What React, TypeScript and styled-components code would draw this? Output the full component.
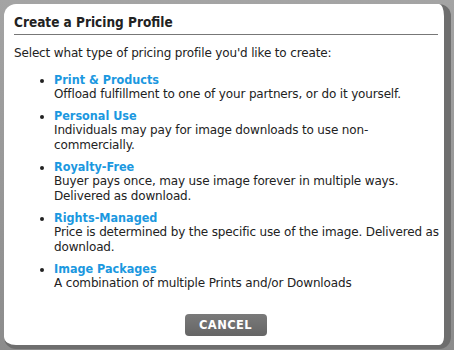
import styled, { createGlobalStyle } from 'styled-components';

const GlobalStyle = createGlobalStyle`
  html, body {
    margin: 0;
    padding: 0;
    width: 454px;
    height: 350px;
    overflow: hidden;
    background: #8c8c8c;
  }
`;

const Backdrop = styled.div`
  width: 454px;
  height: 350px;
  box-sizing: border-box;
  padding: 4px 3px 1px 4px;
  background: linear-gradient(#a4a4a4, #8c8c8c);
`;

const Dialog = styled.div`
  height: 100%;
  box-sizing: border-box;
  background: #fff;
  border-radius: 12px;
  border-right: 7px solid #6e6e6e;
  border-bottom: 4px solid #6e6e6e;
  padding: 6px 3px 0 10px;
  display: flex;
  flex-direction: column;
  font-family: 'DejaVu Sans', sans-serif;
  color: #222;
`;

const Title = styled.h1`
  margin: 0 3px 0 0;
  padding: 3px 0;
  font-family: 'DejaVu Sans Condensed', 'DejaVu Sans', sans-serif;
  font-size: 13.5px;
  line-height: 18px;
  font-weight: bold;
  border-bottom: 1px solid #777;
`;

const Intro = styled.p`
  margin: 11px 0 0;
  font-size: 12px;
  line-height: 15px;
  letter-spacing: -0.15px;
`;

const List = styled.ul`
  margin: 11px 0 0;
  padding: 0 0 0 40px;
  list-style: disc;
  font-size: 12px;
  line-height: 15px;
  letter-spacing: -0.15px;
`;

const Item = styled.li`
  margin-bottom: 6px;
`;

const Link = styled.a`
  display: block;
  color: #1b98e0;
  font-family: 'DejaVu Sans Condensed', 'DejaVu Sans', sans-serif;
  font-weight: bold;
  font-size: 12.5px;
  letter-spacing: 0;
  text-decoration: none;
`;

const Footer = styled.div`
  margin-top: auto;
  padding: 0 4px 9px 0;
  display: flex;
  justify-content: center;
`;

const Button = styled.button`
  width: 82px;
  height: 22px;
  border: none;
  border-radius: 4px;
  background: linear-gradient(#7a7a7a, #656565);
  color: #fff;
  font-family: 'DejaVu Sans', sans-serif;
  font-size: 11.5px;
  font-weight: bold;
  letter-spacing: 0.4px;
`;

const items = [
  ['Print & Products', 'Offload fulfillment to one of your partners, or do it yourself.'],
  ['Personal Use', 'Individuals may pay for image downloads to use non-commercially.'],
  ['Royalty-Free', 'Buyer pays once, may use image forever in multiple ways. Delivered as download.'],
  ['Rights-Managed', 'Price is determined by the specific use of the image. Delivered as download.'],
  ['Image Packages', 'A combination of multiple Prints and/or Downloads'],
];

export default function App() {
  return (
    <>
      <GlobalStyle />
      <Backdrop>
        <Dialog>
          <Title>Create a Pricing Profile</Title>
          <Intro>Select what type of pricing profile you'd like to create:</Intro>
          <List>
            {items.map(([name, desc]) => (
              <Item key={name}>
                <Link href="#">{name}</Link>
                {desc}
              </Item>
            ))}
          </List>
          <Footer>
            <Button>CANCEL</Button>
          </Footer>
        </Dialog>
      </Backdrop>
    </>
  );
}
